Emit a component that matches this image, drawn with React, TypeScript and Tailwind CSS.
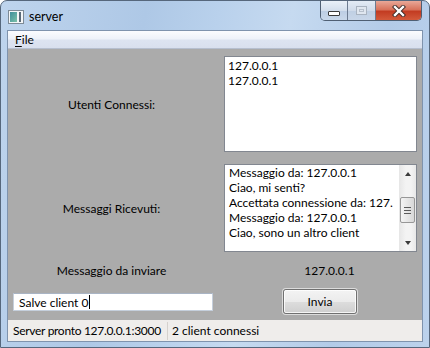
import { ReactNode } from 'react';

const FONT = "font-['Lato','Segoe_UI',sans-serif]";

const messages = [
  'Messaggio da: 127.0.0.1',
  'Ciao, mi senti?',
  'Accettata connessione da: 127.',
  'Messaggio da: 127.0.0.1',
  'Ciao, sono un altro client',
];

function TitleIcon() {
  return (
    <svg width="16" height="16" viewBox="0 0 16 16">
      <rect x="0.5" y="1.5" width="15" height="13" fill="#f4f6f8" stroke="#7d8a96" />
      <defs>
        <linearGradient id="tg" x1="0" y1="0" x2="1" y2="1">
          <stop offset="0" stopColor="#3f8f9c" />
          <stop offset="1" stopColor="#7cc1a8" />
        </linearGradient>
      </defs>
      <rect x="2" y="3" width="7" height="10" fill="url(#tg)" />
      <rect x="11" y="3" width="2" height="10" fill="#5a6a78" />
    </svg>
  );
}

function CaptionButtons() {
  return (
    <div className="flex h-[20px] self-start border border-t-0 border-[#4f5f73] rounded-b-[5px] overflow-hidden">
      <div className="w-[27px] flex items-start justify-center border-r border-[#6c7b90] bg-[linear-gradient(#e9f0f8,#d3deec_50%,#bccde3_51%,#c9d8ea)]">
        <div className="mt-[10px] w-[12px] h-[5px] bg-white border border-[#3a3a3a] rounded-[1px]" />
      </div>
      <div className="w-[28px] flex items-start justify-center border-r border-[#6c7b90] bg-[linear-gradient(#e3ebf5,#d0dbea_50%,#bfcfe3_51%,#c8d6e8)]">
        <div className="mt-[5px] w-[11px] h-[9px] border border-[#a9b3c0] bg-[#dfe6ef] flex items-center justify-center">
          <div className="w-[5px] h-[3px] border border-[#b7c0cc]" />
        </div>
      </div>
      <div className="w-[45px] flex items-start justify-center bg-[linear-gradient(#e9a898,#d8735c_45%,#c33c22_55%,#d35a3b)]">
        <svg width="14" height="12" viewBox="0 0 14 12" className="mt-[4px]">
          <path d="M3 2 L11 10 M11 2 L3 10" stroke="#3b2a28" strokeWidth="4.2" strokeLinecap="square" />
          <path d="M3 2 L11 10 M11 2 L3 10" stroke="#ffffff" strokeWidth="2.4" strokeLinecap="square" />
        </svg>
      </div>
    </div>
  );
}

function ListBox({ className, children }: { className: string; children: ReactNode }) {
  return (
    <div className={`bg-white border border-[#828790] overflow-hidden ${className}`}>{children}</div>
  );
}

function ScrollBar() {
  return (
    <div className="w-[17px] h-full flex flex-col bg-[linear-gradient(90deg,#e6e6e6,#f3f3f3_40%,#f3f3f3_70%,#e8e8e8)]">
      <div className="h-[17px] flex items-center justify-center">
        <div className="w-0 h-0 border-x-[3px] border-x-transparent border-b-[4px] border-b-[#3b3b3b]" />
      </div>
      <div className="h-[15px]" />
      <div className="h-[26px] mx-[1px] rounded-[2px] border border-[#979797] bg-[linear-gradient(90deg,#f4f4f4,#e6e6e6_50%,#d8d8d8)] flex flex-col items-center justify-center gap-[2px]">
        <div className="w-[7px] h-px bg-[#5a5a5a]" />
        <div className="w-[7px] h-px bg-[#5a5a5a]" />
        <div className="w-[7px] h-px bg-[#5a5a5a]" />
      </div>
      <div className="flex-1" />
      <div className="h-[17px] flex items-center justify-center">
        <div className="w-0 h-0 border-x-[3px] border-x-transparent border-t-[4px] border-t-[#3b3b3b]" />
      </div>
    </div>
  );
}

export default function App() {
  return (
    <div
      className={`${FONT} w-[430px] h-[348px] flex flex-col overflow-hidden rounded-t-[7px] border border-[#56677c] text-[12px] leading-[15px] text-black bg-[linear-gradient(100deg,#bed4ed_0%,#aec8e6_30%,#b9d1ec_45%,#c6daf0_60%,#b3cbe8_80%,#bcd2ec_100%)]`}
    >
      {/* title bar */}
      <div className="h-[29px] flex items-start pl-[7px] pr-[7px]">
        <div className="mt-[8px]">
          <TitleIcon />
        </div>
        <span className="ml-[5px] mt-[8px] text-[12.5px]">server</span>
        <div className="ml-auto">
          <CaptionButtons />
        </div>
      </div>

      {/* client area */}
      <div className="flex-1 mx-[6px] mb-[5px] flex flex-col border border-[#7f93ad]">
        {/* menu */}
        <div className="h-[18px] flex items-center pl-[7px] border-b border-[#b6bfcf] bg-[linear-gradient(#fbfcfe,#eef2f9_45%,#dde4f1_55%,#d9e0ee)]">
          <span>
            <span className="underline underline-offset-2">F</span>ile
          </span>
        </div>

        {/* content */}
        <div className="h-[271px] bg-[#ababab] grid grid-cols-[207px_207px] grid-rows-[109px_100px_24px_38px]">
          <div className="flex items-center justify-center pt-[7px] pb-[6px]">Utenti Connessi:</div>
          <div className="pt-[7px] pl-[9px]">
            <ListBox className="w-[193px] h-[96px] pl-[3px] pt-px">
              <div>127.0.0.1</div>
              <div>127.0.0.1</div>
            </ListBox>
          </div>

          <div className="flex items-center justify-center pt-[6px] pb-[6px]">Messaggi Ricevuti:</div>
          <div className="pt-[6px] pl-[9px]">
            <ListBox className="w-[193px] h-[88px] flex">
              <div className="flex-1 pl-[4px] whitespace-nowrap overflow-hidden">
                {messages.map((m, i) => (
                  <div key={i}>{m}</div>
                ))}
              </div>
              <ScrollBar />
            </ListBox>
          </div>

          <div className="flex items-center justify-center">Messaggio da inviare</div>
          <div className="flex items-center justify-center pl-[22px]">127.0.0.1</div>

          <div className="pt-[11px] pl-[5px]">
            <div className="w-[200px] h-[18px] bg-white border border-[#c5cfdc] border-t-[#a9b4c4] flex items-center pl-[5px]">
              <span>Salve client 0</span>
              <span className="ml-px w-px h-[14px] bg-black" />
            </div>
          </div>
          <div className="pt-[7px] pl-[68px]">
            <div className="w-[74px] h-[25px] rounded-[3px] border border-[#707070] shadow-[0_0_0_1px_#dcdcdc] bg-[linear-gradient(#f3f3f3,#ebebeb_50%,#dddddd_51%,#cfcfcf)] flex items-center justify-center">
              <div className="w-full h-full rounded-[2px] border border-white/80 flex items-center justify-center">
                Invia
              </div>
            </div>
          </div>
        </div>

        {/* status bar */}
        <div className="flex-1 bg-[#efedeb] flex items-center">
          <span className="pl-[5px] w-[159px] whitespace-nowrap tracking-[-0.3px]">Server pronto 127.0.0.1:3000</span>
          <span className="w-px h-[18px] bg-[#d5d1cd]" />
          <span className="pl-[4px]">2 client connessi</span>
        </div>
      </div>
    </div>
  );
}
